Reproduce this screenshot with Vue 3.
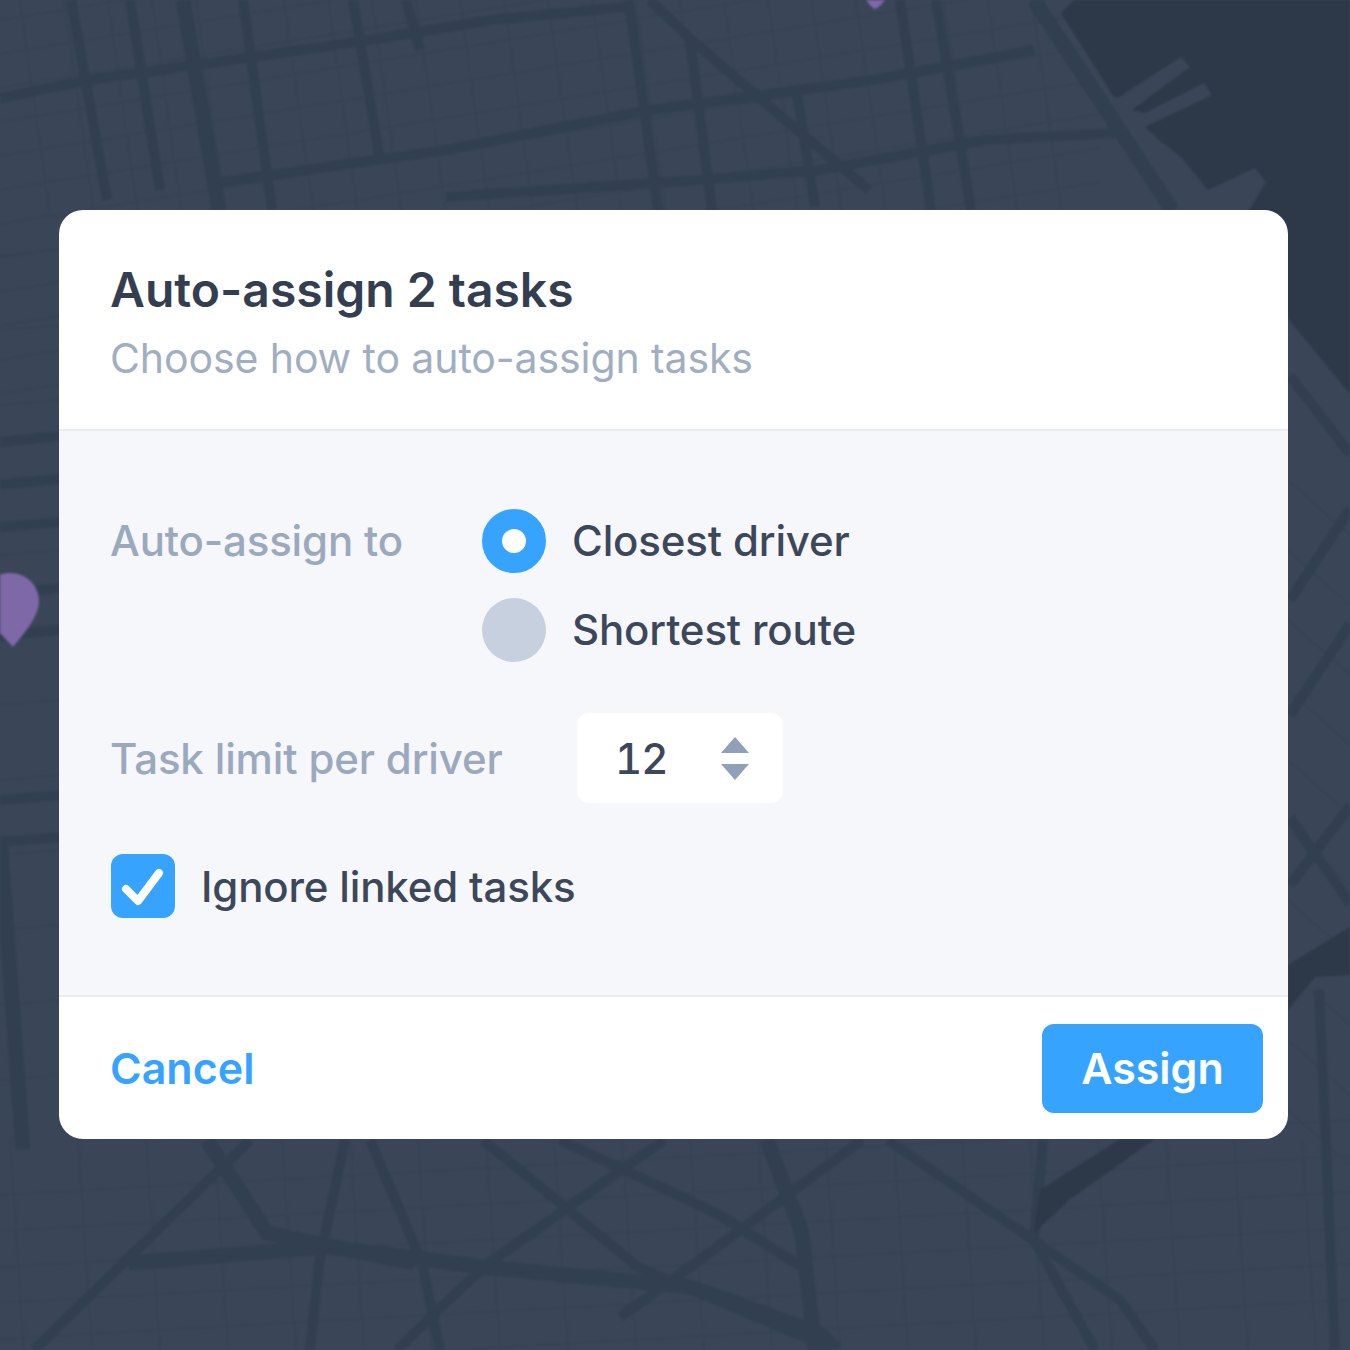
<template>
  <div class="screen">
    <svg class="map" viewBox="0 0 1350 1350" aria-hidden="true">
      <rect width="1350" height="1350" fill="#3a4658" />
      <path v-for="road in minorRoads" :key="road" class="minor" :d="road" />
      <path v-for="road in majorRoads" :key="road" class="major" :d="road" />
      <path v-for="road in arterials" :key="road" class="arterial" :d="road" />
      <path class="water" d="M1074 0 L1061 13 L1114 97 L1119 97 L1181 57 L1190 67 L1132 110 L1145 113 L1204 83 L1212 95 L1145 127 L1159 140 L1181 157 L1208 190 L1255 168 L1266 182 L1248 212 L1290 321 L1350 394 L1350 0 Z" />
      <path class="water" d="M1288 965 L1350 927 L1350 975 L1315 977 L1288 1010 Z" />
      <path class="water" d="M1155 1139 L1069 1200 L1034 1233 L1040 1190 L1120 1139 Z" />
      <path class="pin" d="M10 573 C26 573 39 585 39 601 C39 617 22 636 13 647 C4 637 -18 617 -18 601 C-18 585 -6 573 10 573 Z" />
      <path class="pin" d="M866 0 L885 0 C882 4 878 8 875 9 C872 8 869 4 866 0 Z" />
    </svg>

    <section class="modal">
      <header class="modal-head">
        <h1>Auto-assign 2 tasks</h1>
        <p>Choose how to auto-assign tasks</p>
      </header>

      <div class="modal-body">
        <div class="assign-row">
          <span class="field-label">Auto-assign to</span>
          <div class="radio-list">
            <label v-for="option in options" :key="option.label" class="radio-item">
              <i class="radio" :class="{ checked: option.checked }"></i>
              {{ option.label }}
            </label>
          </div>
        </div>

        <div class="limit-row">
          <span class="field-label">Task limit per driver</span>
          <div class="stepper">
            <span>12</span>
            <svg width="30" height="44" viewBox="0 0 30 44">
              <path d="M15 1 L29 17 L1 17 Z" />
              <path d="M1 28 L29 28 L15 44 Z" />
            </svg>
          </div>
        </div>

        <label class="check-row">
          <i class="checkbox">
            <svg width="64" height="64" viewBox="0 0 64 64">
              <path d="M15 35 L27 47 L48 19" />
            </svg>
          </i>
          Ignore linked tasks
        </label>
      </div>

      <footer class="modal-foot">
        <a class="cancel">Cancel</a>
        <button class="assign">Assign</button>
      </footer>
    </section>
  </div>
</template>

<script setup>
const options = [
  { label: 'Closest driver', checked: true },
  { label: 'Shortest route', checked: false }
]

const arterials = [
  'M183 0 L219 210',
  'M1034 0 L1172 210',
  'M129 1263 L328 1247 L483 1267 L690 1287 L819 1333 L836 1350',
  'M767 1140 L802 1233 L815 1350',
  'M0 836 L23 1150',
  'M207 1140 L267 1233 L414 1263'
]

const majorRoads = [
  'M0 98 L89 80 L245 58 L357 42 L491 20 L625 7',
  'M214 183 L446 150 L650 110 L873 80 L1034 50',
  'M446 197 L700 180 L820 170 L985 140 L1114 133',
  'M71 0 L107 200',
  'M130 0 L160 190',
  'M243 0 L272 210',
  'M353 0 L380 160',
  'M406 0 L420 50',
  'M629 0 L658 210',
  'M650 0 L695 43 L770 107 L869 190',
  'M690 40 L712 210',
  'M797 93 L815 207',
  'M900 0 L931 210',
  'M936 0 L971 210',
  'M0 442 L60 436',
  'M0 485 L60 479',
  'M0 527 L60 522',
  'M0 594 L60 588',
  'M0 636 L60 630',
  'M0 800 L60 795',
  'M0 842 L60 837',
  'M1290 376 L1350 454',
  'M1290 600 L1350 509',
  'M1290 715 L1350 624',
  'M1290 818 L1350 903',
  'M1290 885 L1350 806',
  'M1319 990 L1335 1350',
  'M250 1140 L34 1350',
  'M345 1140 L319 1263 L310 1350',
  'M370 1140 L422 1263 L440 1350',
  'M483 1140 L638 1267 L828 1347',
  'M560 1140 L716 1213 L802 1267',
  'M664 1140 L483 1267 L397 1350',
  'M862 1140 L690 1267 L620 1317',
  'M888 1140 L1120 1300 L1155 1350',
  'M1043 1140 L1034 1240 L1095 1350'
]

// thin block lines, two directions across the land
const minorRoads = [
  ...Array.from({ length: 12 }, (_, i) => `M0 ${20 + i * 34} L1100 ${-158 + i * 34}`),
  ...Array.from({ length: 24 }, (_, i) => `M${20 + i * 44} 0 L${50 + i * 44} 215`),
  ...Array.from({ length: 20 }, (_, i) => `M${10 + i * 68} 1139 L${24 + i * 68} 1350`),
  ...Array.from({ length: 6 }, (_, i) => `M0 ${1195 + i * 36} L1350 ${1120 + i * 36}`),
  ...Array.from({ length: 12 }, (_, i) => `M0 ${255 + i * 75} L60 ${250 + i * 75}`),
  ...Array.from({ length: 10 }, (_, i) => `M1288 ${480 + i * 70} L1350 ${535 + i * 70}`)
]
</script>

<style>
body {
  background: #3a4658;
}
</style>

<style scoped>
.screen {
  position: relative;
  width: 1350px;
  height: 1350px;
  box-sizing: border-box;
  padding: 210px 62px 211px 59px;
  overflow: hidden;
  font-family: Inter, "Liberation Sans", sans-serif;
}

.map {
  position: absolute;
  inset: 0;
  width: 1350px;
  height: 1350px;
  filter: blur(0.8px);
}

.water {
  fill: #2d3848;
}

.major,
.arterial {
  fill: none;
  stroke: #323f51;
  stroke-width: 10;
}

.arterial {
  stroke-width: 15;
}

.minor {
  fill: none;
  stroke: #364355;
  stroke-width: 2;
}

.pin {
  fill: #7e68a8;
}

.modal {
  position: relative;
  display: flex;
  flex-direction: column;
  height: 929px;
  border-radius: 24px;
  background: #fff;
  overflow: hidden;
}

.modal-head {
  height: 221px;
  box-sizing: border-box;
  padding: 50px 52px 0;
  border-bottom: 2px solid #e9ecf1;
}

.modal-head h1 {
  margin: 0 0 0 -1px;
  color: #333f50;
  font-size: 48px;
  font-weight: 600;
  line-height: 60px;
}

.modal-head p {
  margin: 8px 0 0 -1px;
  color: #9fafc1;
  font-size: 41px;
  line-height: 60px;
  letter-spacing: -0.1px;
}

.modal-body {
  flex: 1;
  display: flex;
  flex-direction: column;
  padding: 78px 52px 0;
  background: #f5f7fb;
  border-bottom: 2px solid #e9ecf1;
  color: #3c4859;
  font-size: 42px;
  font-weight: 450;
  letter-spacing: -0.15px;
}

.field-label {
  margin-left: -1px;
  color: #9aa9bd;
}

.assign-row {
  display: flex;
  line-height: 64px;
}

.assign-row .field-label {
  width: 372px;
}

.radio-list {
  display: grid;
  gap: 25px;
}

.radio-item {
  display: flex;
  align-items: center;
  gap: 26px;
}

.radio {
  width: 64px;
  height: 64px;
  box-sizing: border-box;
  border-radius: 50%;
  background: #c6d0df;
}

.radio.checked {
  border: 20px solid #36a3ff;
  background: #fff;
}

.limit-row {
  display: flex;
  align-items: center;
  margin-top: 51px;
}

.limit-row .field-label {
  width: 467px;
}

.stepper {
  display: flex;
  align-items: center;
  justify-content: space-between;
  width: 206px;
  height: 90px;
  box-sizing: border-box;
  padding: 0 33px 0 38px;
  border-radius: 12px;
  background: #fff;
  font-variant-numeric: tabular-nums;
  letter-spacing: -1px;
}

.stepper path {
  fill: #8fa0b8;
}

.check-row {
  display: flex;
  align-items: center;
  gap: 26px;
  margin-top: 51px;
}

.checkbox {
  width: 64px;
  height: 64px;
  border-radius: 12px;
  background: #36a3ff;
}

.checkbox svg {
  display: block;
}

.checkbox path {
  fill: none;
  stroke: #fff;
  stroke-width: 8;
  stroke-linecap: round;
  stroke-linejoin: round;
}

.modal-foot {
  height: 142px;
  box-sizing: border-box;
  display: flex;
  align-items: center;
  justify-content: space-between;
  padding: 0 25px 0 52px;
}

.cancel {
  margin-left: -1px;
  color: #36a3ff;
  font-size: 43px;
  font-weight: 600;
}

.assign {
  width: 221px;
  height: 89px;
  border: 0;
  border-radius: 12px;
  background: #36a3ff;
  color: #fff;
  font-family: inherit;
  font-size: 43px;
  font-weight: 600;
}
</style>
